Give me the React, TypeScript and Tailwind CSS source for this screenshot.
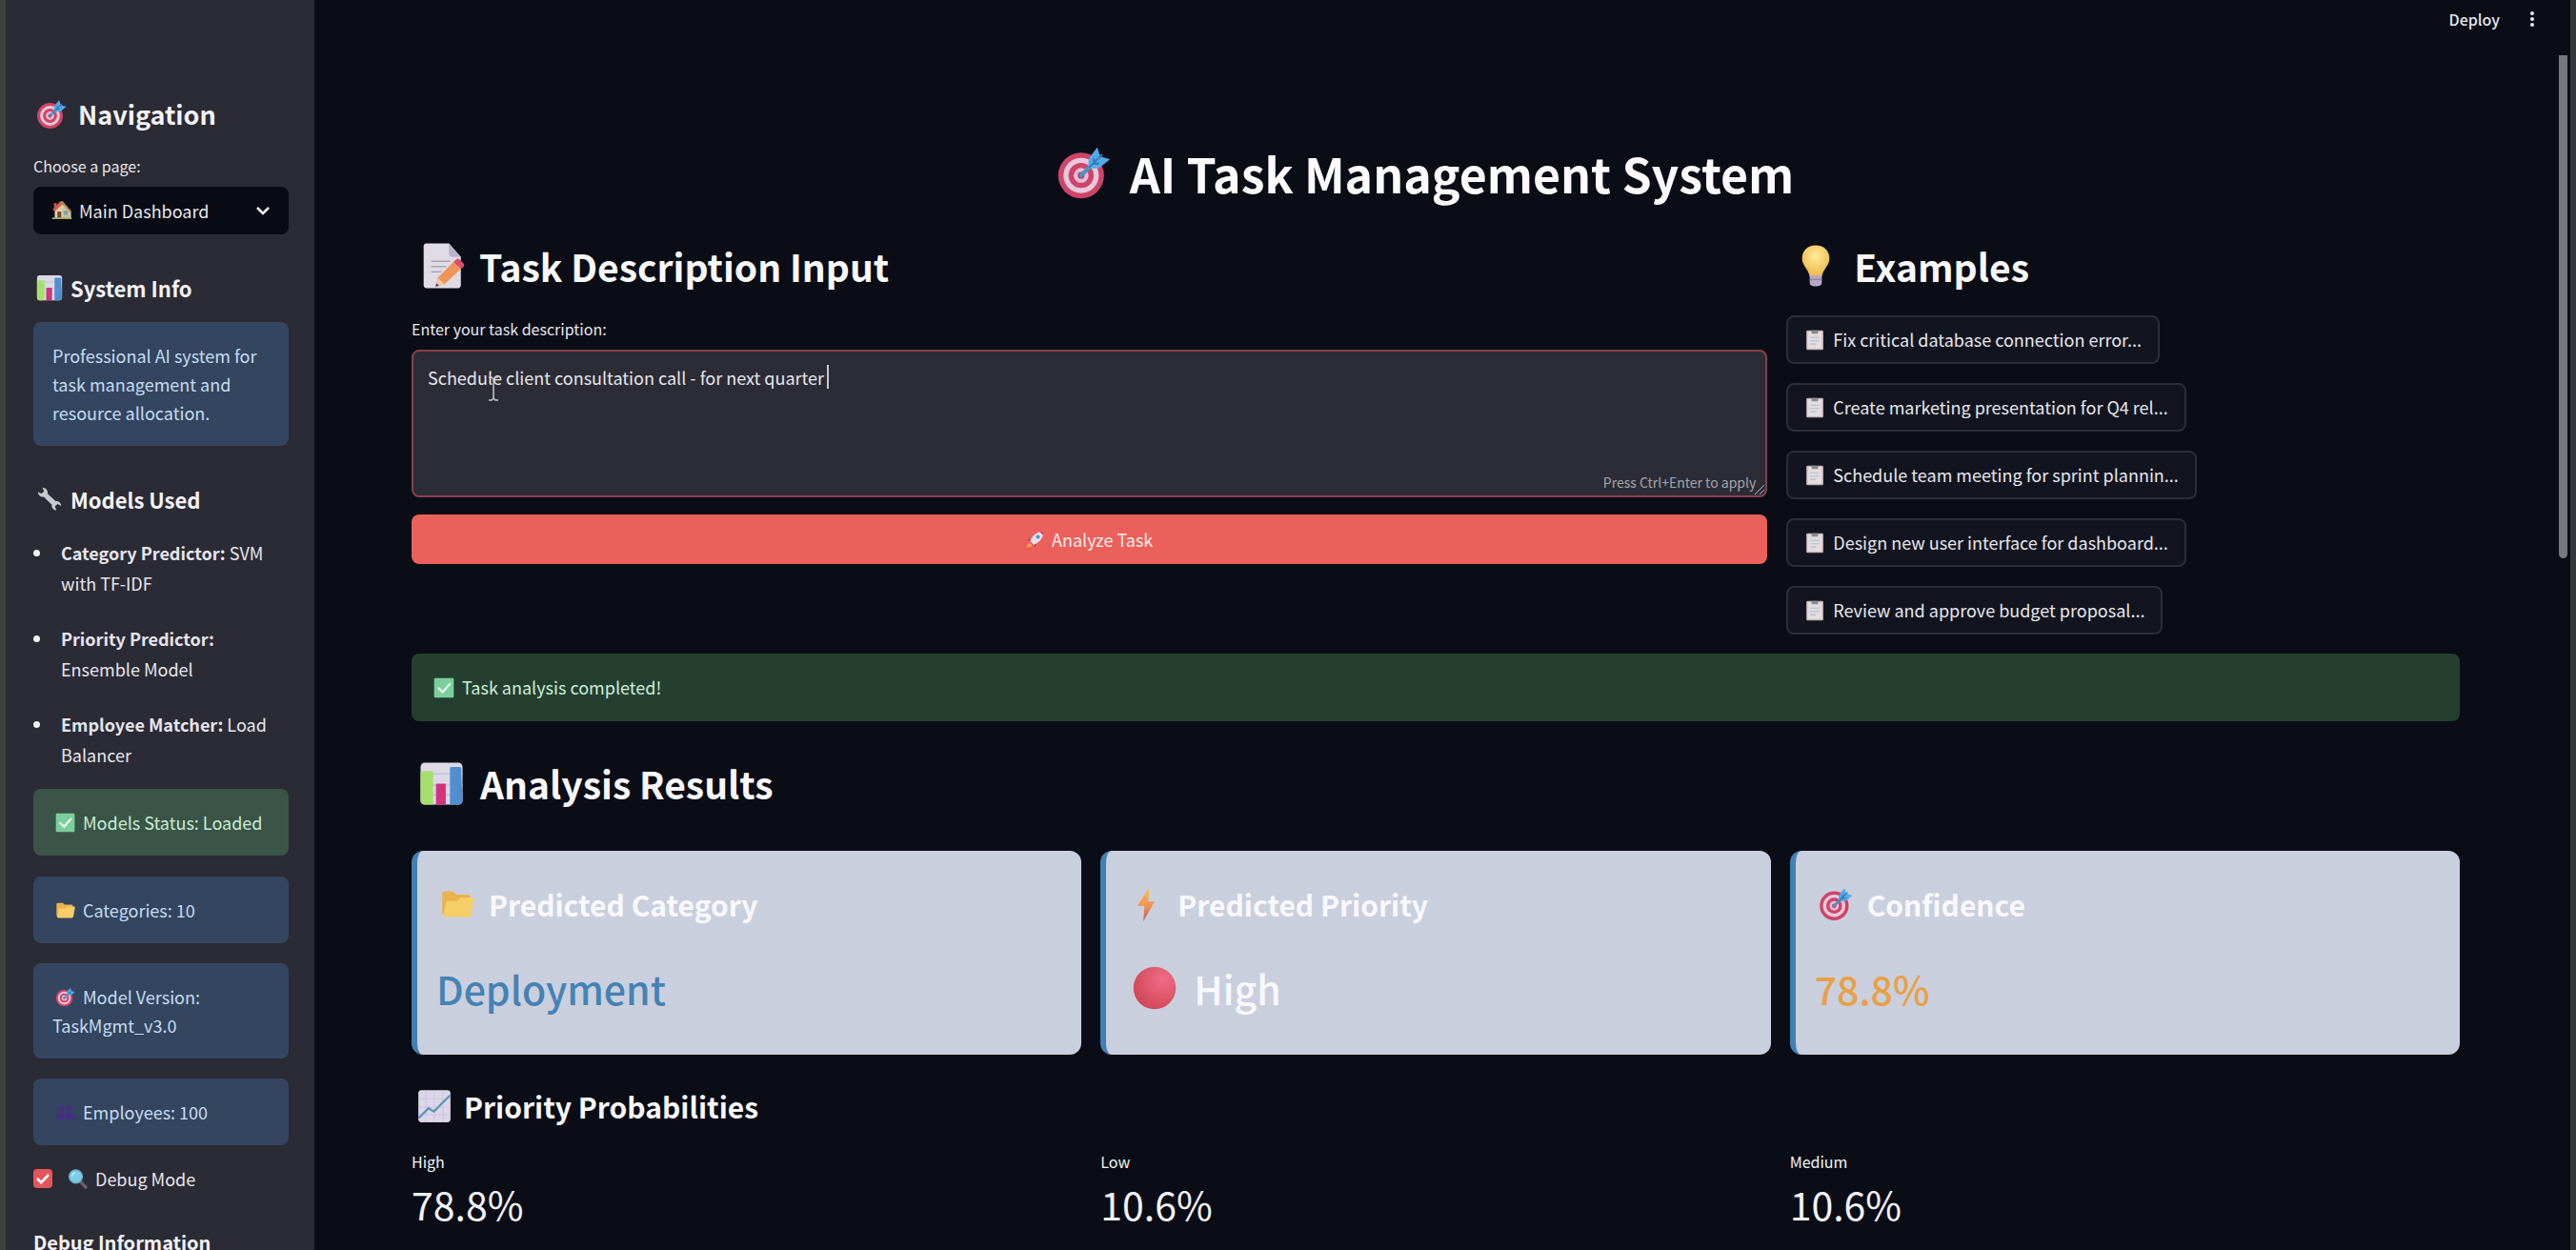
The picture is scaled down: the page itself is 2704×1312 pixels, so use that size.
import type { ReactNode } from "react";
import { useState } from "react";

type IconProps = { className: string };

function Svg({ className, children }: { className: string; children: ReactNode }) {
  return (
    <svg viewBox="0 0 32 32" className={`shrink-0 ${className}`} aria-hidden="true">
      {children}
    </svg>
  );
}

function Target({ className }: IconProps) {
  return (
    <Svg className={className}>
      <circle cx="14.5" cy="17.5" r="13.5" fill="#cf4468" />
      <circle cx="14.5" cy="17.5" r="10.4" fill="#e9c8dc" />
      <circle cx="14.5" cy="17.5" r="7.4" fill="#cf4468" />
      <circle cx="14.5" cy="17.5" r="4.4" fill="#e6bdd3" />
      <circle cx="14.5" cy="17.5" r="2" fill="#c23c66" />
      <path d="M14.5 17.5 24 8" stroke="#4d93c4" strokeWidth="2.4" strokeLinecap="round" />
      <path d="M18.5 13.5 19 7.5 24 1l1.8 5.2L31.5 8 25 13.2Z" fill="#55a9e6" />
      <path d="M19 13 27 5M22 7.5v3h3" stroke="#2f79b6" strokeWidth="1.1" fill="none" />
    </Svg>
  );
}

function House({ className }: IconProps) {
  return (
    <Svg className={className}>
      <path d="M5 14 14 5l12 11v13H5Z" fill="#e0cdb0" />
      <path d="M16 28V16l6-7 8 10v10H16Z" fill="#c9c39a" />
      <path d="M2 16 13 3.5l5 3L5 19Z" fill="#d8603f" />
      <path d="M13 3.5 17 3l13 15-2 2Z" fill="#b98a63" />
      <rect x="4" y="6" width="4" height="9" fill="#c65a45" />
      <rect x="9" y="19" width="6" height="10" fill="#7b4a35" />
      <rect x="19" y="18" width="6" height="6" fill="#7aa0b4" />
      <path d="M1 28h30v2.5H1Z" fill="#9fb36e" />
    </Svg>
  );
}

function BarChart({ className }: IconProps) {
  return (
    <Svg className={className}>
      <rect x="1" y="1" width="30" height="30" rx="3" fill="#dcd9e6" />
      <path d="M1 9h30M1 17h30M1 24h30" stroke="#c6c2d4" strokeWidth="1" />
      <path d="M2 8a1 1 0 0 1 1-1h6a1 1 0 0 1 1 1v23H4a3 3 0 0 1-3-3V8Z" fill="#a5e06e" />
      <path d="M12 17a1 1 0 0 1 1-1h6v15h-7Z" fill="#d4337c" />
      <path d="M22 5a1 1 0 0 1 1-1h6a1 1 0 0 1 1 1l1 23a3 3 0 0 1-3 3h-6Z" fill="#4f8fd0" />
    </Svg>
  );
}

function LineChart({ className }: IconProps) {
  return (
    <Svg className={className}>
      <rect x="1" y="1" width="30" height="30" rx="3" fill="#dcd6e8" />
      <path d="M8 1v30M16 1v30M24 1v30M1 9h30M1 17h30M1 24h30" stroke="#cbc4dc" strokeWidth=".8" />
      <path d="m1.500 27 9-9 5 3L30.500 6" stroke="#5b97b5" strokeWidth="2" fill="none" />
    </Svg>
  );
}

function Wrench({ className }: IconProps) {
  return (
    <Svg className={className}>
      <path
        d="M2 7.500 7.500 2c4 0 7 3.500 6.200 7.400l9.600 8.900c3.700-.6 6.700 2 6.700 5.700l-4.300-2.200-3.200 2.900 1.800 4.600c-3.800-.3-6.100-3-5.600-6.800L9 13.200C5.500 13.800 2.500 11.500 2 7.500l4.400 1.700 3-2.700L7.500 2Z"
        fill="#c9c8cf"
      />
    </Svg>
  );
}

function CheckBox({ className }: IconProps) {
  return (
    <Svg className={className}>
      <rect x="1" y="1" width="30" height="30" rx="2" fill="#7ccf9c" />
      <path d="m8 16.500 6 6L25 10" stroke="#f0fff5" strokeWidth="3" fill="none" strokeLinecap="round" />
    </Svg>
  );
}

function Folder({ className }: IconProps) {
  return (
    <Svg className={className}>
      <path d="M2 6a2 2 0 0 1 2-2h8l3 3h11a2 2 0 0 1 2 2v17H4a2 2 0 0 1-2-2Z" fill="#eab24a" />
      <path d="M6 13h10l3-3h11a1.500 1.500 0 0 1 1.400 2L29 26a3 3 0 0 1-3 2H5a2 2 0 0 1-2-2Z" fill="#f7cd66" />
    </Svg>
  );
}

function People({ className }: IconProps) {
  return (
    <Svg className={className}>
      <g fill="#43307f">
        <circle cx="10" cy="10" r="5" />
        <path d="M1 28v-5c0-4 3-6.500 9-6.500 3 0 5 1 6 3 1-2 3-3 6-3 6 0 9 2.500 9 6.500v5Z" />
        <circle cx="22" cy="10" r="5" />
      </g>
      <path d="M16 19v9" stroke="#34456a" strokeWidth="1.500" />
    </Svg>
  );
}

function Magnifier({ className }: IconProps) {
  return (
    <Svg className={className}>
      <path d="m20 20 9 9" stroke="#6a5f6d" strokeWidth="5" strokeLinecap="round" />
      <circle cx="13" cy="12" r="10.500" fill="#7fcbe6" stroke="#66aecb" strokeWidth="2" />
      <path d="M7 11c.5-3 2.500-5 5.500-5" stroke="#c6effb" strokeWidth="2" fill="none" strokeLinecap="round" />
    </Svg>
  );
}

function Memo({ className }: IconProps) {
  return (
    <Svg className={className}>
      <path d="M3 3a2 2 0 0 1 2-2h15l8 9v19a2 2 0 0 1-2 2H5a2 2 0 0 1-2-2Z" fill="#dfdce6" />
      <path d="M20 1v7a2 2 0 0 0 2 2h6Z" fill="#b7b3cc" />
      <path d="M8 13h13M8 16.500h10M8 20h7" stroke="#a9a6b4" strokeWidth="1" />
      <path d="m11 30 1.500-6L23 13.500l5 4.500L17 28.500Z" fill="#f0955a" />
      <path d="m23 13.500 1.500-1.500c1-1 2-1 3 0l2 2c1 1 1 2 0 3L28 18Z" fill="#d94f6b" />
      <path d="m11 30 1.500-6 4.500 4.500Z" fill="#efc9a8" />
      <path d="m11 30 .6-2.400 1.800 1.700Z" fill="#4c4450" />
    </Svg>
  );
}

function Bulb({ className }: IconProps) {
  return (
    <Svg className={className}>
      <defs>
        <radialGradient id="bulb" cx=".5" cy=".35" r=".6">
          <stop offset="0" stopColor="#fdeb9c" />
          <stop offset="1" stopColor="#efbb4e" />
        </radialGradient>
      </defs>
      <path d="M16 1C9.800 1 6 5.300 6 10.700c0 5 4.600 7.300 5.600 13.300h8.800C21.400 18 26 15.700 26 10.700 26 5.300 22.200 1 16 1Z" fill="url(#bulb)" />
      <path d="M11.600 23h8.800v5.500c0 1.500-1.400 2.500-4.400 2.500s-4.400-1-4.400-2.500Z" fill="#b9a5c4" />
      <path d="M11.600 26h8.800" stroke="#93809f" strokeWidth="1" />
    </Svg>
  );
}

function Rocket({ className }: IconProps) {
  return (
    <Svg className={className}>
      <path d="M9 14 2 17l5 2ZM18 23l-3 7-2-5Z" fill="#c33a5c" />
      <path d="M7 19C10 10 18 3 30 2c-1 12-8 20-17 23Z" fill="#e5dfec" />
      <path d="M23 3.500C25 2.600 27.500 2.100 30 2c-.1 2.500-.6 5-1.500 7Z" fill="#c84468" />
      <circle cx="20" cy="12" r="3.200" fill="#4f8fd0" />
      <path d="M6 22c-3 1-4 4-4 8 4 0 7-1 8-4Z" fill="#f3a24c" />
    </Svg>
  );
}

function Clipboard({ className }: IconProps) {
  return (
    <Svg className={className}>
      <rect x="3" y="1" width="26" height="30" rx="2" fill="#c4b2b4" />
      <rect x="5" y="3" width="22" height="26" fill="#e2dde3" />
      <rect x="11" y="1" width="10" height="5" rx="1" fill="#8d8791" />
      <path d="M9 12h14M9 17h14M9 22h9" stroke="#c0bbc4" strokeWidth="1.500" />
    </Svg>
  );
}

function Bolt({ className }: IconProps) {
  return (
    <Svg className={className}>
      <defs>
        <linearGradient id="bolt" x1="0" y1="0" x2="0" y2="1">
          <stop offset="0" stopColor="#f6c25c" />
          <stop offset=".55" stopColor="#ee9350" />
          <stop offset="1" stopColor="#c75470" />
        </linearGradient>
      </defs>
      <path d="M19 0 8 17.500h6.500L13.500 32 24 13.500h-6Z" fill="url(#bolt)" />
    </Svg>
  );
}

function RedCircle({ className }: IconProps) {
  return (
    <Svg className={className}>
      <defs>
        <radialGradient id="red" cx=".7" cy=".3" r=".8">
          <stop offset="0" stopColor="#ee6c84" />
          <stop offset="1" stopColor="#cf4655" />
        </radialGradient>
      </defs>
      <circle cx="16" cy="16" r="15.500" fill="url(#red)" />
    </Svg>
  );
}

const examples = [
  "Fix critical database connection error...",
  "Create marketing presentation for Q4 rel...",
  "Schedule team meeting for sprint plannin...",
  "Design new user interface for dashboard...",
  "Review and approve budget proposal...",
];

const models = [
  ["Category Predictor:", "SVM with TF-IDF"],
  ["Priority Predictor:", "Ensemble Model"],
  ["Employee Matcher:", "Load Balancer"],
];

const probabilities = [
  ["High", "78.8%"],
  ["Low", "10.6%"],
  ["Medium", "10.6%"],
];

function SideHeading({ icon, children }: { icon: ReactNode; children: ReactNode }) {
  return (
    <h3 className="flex items-center gap-2 pl-[3px] text-[22px] leading-8 font-bold text-[#f3f3f7]">
      {icon}
      {children}
    </h3>
  );
}

function SideNote({ icon, children }: { icon?: ReactNode; children: ReactNode }) {
  return (
    <div className="rounded-lg bg-[#34455f] px-5 py-5 text-[18px] leading-[30px] text-[#c5dcf3]">
      {icon}
      {children}
    </div>
  );
}

function Sidebar() {
  const [debug, setDebug] = useState(true);
  return (
    <aside className="flex w-[330px] shrink-0 flex-col overflow-hidden border-l-[6px] border-[#3f403e] bg-[#2b2b35] pr-[27px] pl-[29px] text-[#e6e6ec]">
      <h2 className="mt-[100px] flex items-center gap-3 pl-[3px] text-[27px] leading-10 font-bold text-[#f3f3f7]">
        <Target className="size-8" />
        Navigation
      </h2>
      <label htmlFor="page" className="mt-[22px] text-[16px] leading-6">
        Choose a page:
      </label>
      <div className="relative mt-[10px]">
        <select
          id="page"
          className="h-[50px] w-full appearance-none rounded-lg bg-[#090b14] pr-10 pl-12 text-[18px] text-[#e6e6ec]"
        >
          <option>Main Dashboard</option>
        </select>
        <House className="pointer-events-none absolute top-[13px] left-[19px] size-[22px]" />
        <svg
          viewBox="0 0 16 16"
          className="pointer-events-none absolute top-[17px] right-[19px] size-4"
          fill="none"
          stroke="#f0f0f4"
          strokeWidth="2.500"
          aria-hidden="true"
        >
          <path d="m2 5 6 6 6-6" />
        </svg>
      </div>

      <div className="mt-10">
        <SideHeading icon={<BarChart className="size-7" />}>System Info</SideHeading>
      </div>
      <div className="mt-5">
        <SideNote>Professional AI system for task management and resource allocation.</SideNote>
      </div>

      <div className="mt-10">
        <SideHeading icon={<Wrench className="size-7" />}>Models Used</SideHeading>
      </div>
      <ul className="mt-6 flex flex-col gap-[26px] text-[18px] leading-8">
        {models.map(([name, model]) => (
          <li key={name} className="relative pl-[29px]">
            <span className="absolute top-[13px] left-0 size-[7px] rounded-full bg-[#f3f3f7]" />
            <strong>{name}</strong> {model}
          </li>
        ))}
      </ul>

      <div className="mt-5 flex items-center gap-2 rounded-lg bg-[#3a5547] py-5 pl-[23px] text-[18px] leading-[30px] text-[#c9ecd8]">
        <CheckBox className="size-[21px]" />
        Models Status: Loaded
      </div>
      <div className="mt-[22px] flex flex-col gap-[21px]">
        <SideNote icon={<Folder className="mr-2 ml-[3px] inline-block size-[21px] align-[-3px]" />}>
          Categories: 10
        </SideNote>
        <SideNote icon={<Target className="mr-2 ml-[3px] inline-block size-[21px] align-[-3px]" />}>
          Model Version: TaskMgmt_v3.0
        </SideNote>
        <SideNote icon={<People className="mr-2 ml-[3px] inline-block size-[21px] align-[-3px]" />}>
          Employees: 100
        </SideNote>
      </div>

      <label className="mt-5 flex items-center text-[18px] leading-[30px]">
        <span className="relative flex size-5">
          <input
            type="checkbox"
            checked={debug}
            onChange={(event) => setDebug(event.target.checked)}
            className="size-5 appearance-none rounded bg-[#33343e] checked:bg-[#e5555c]"
          />
          {debug && (
            <svg
              viewBox="0 0 20 20"
              className="pointer-events-none absolute inset-0 size-5"
              fill="none"
              stroke="#fff"
              strokeWidth="2.600"
              aria-hidden="true"
            >
              <path d="m4 10 4.200 4.200L16 6" />
            </svg>
          )}
        </span>
        <Magnifier className="mr-2 ml-4 size-[21px]" />
        Debug Mode
      </label>
      <p className="mt-9 text-[20px] leading-8 font-bold whitespace-nowrap text-[#f3f3f7]">Debug Information</p>
    </aside>
  );
}

function SectionHeading({ icon, children }: { icon: ReactNode; children: ReactNode }) {
  return (
    <h2 className="flex items-center gap-[13px] pl-2 text-[39px] leading-[56px] font-bold text-[#f8f8fb]">
      {icon}
      {children}
    </h2>
  );
}

function ResultCard({ icon, title, children }: { icon: ReactNode; title: string; children: ReactNode }) {
  return (
    <div className="rounded-xl border-l-[6px] border-[#3f81b3] bg-[#cacfde] px-5 pt-[34px] pb-10">
      <h3 className="flex items-center gap-[15px] pl-1 text-[30px] leading-[44px] font-bold text-[#f8f9fd]">
        {icon}
        {title}
      </h3>
      <div className="mt-9 flex items-center text-[41px] leading-[60px] font-medium">{children}</div>
    </div>
  );
}

function TaskForm() {
  const [task, setTask] = useState("Schedule client consultation call - for next quarter");
  return (
    <form
      className="flex min-w-0 grow basis-[calc(66.66%-20px)] flex-col"
      onSubmit={(event) => event.preventDefault()}
    >
      <SectionHeading icon={<Memo className="size-[50px]" />}>Task Description Input</SectionHeading>
      <label htmlFor="task" className="mt-[26px] text-[16px] leading-6 text-[#e6e6ec]">
        Enter your task description:
      </label>
      <div className="relative mt-[10px] flex">
        <textarea
          id="task"
          value={task}
          onChange={(event) => setTask(event.target.value)}
          className="h-[155px] w-full resize-none rounded-lg border-2 border-[#87404f] bg-[#2c2c36] px-[15px] py-[11px] text-[18px] leading-8 text-[#e6e6ec] outline-none"
        />
        <span className="absolute top-4 left-[436px] h-[25px] w-0.5 bg-[#c9c9cf]" />
        <svg
          viewBox="0 0 12 26"
          className="pointer-events-none absolute top-7 left-20 h-[26px] w-3"
          fill="none"
          stroke="#c4c4ca"
          strokeWidth="1.500"
          aria-hidden="true"
        >
          <path d="M1 1h3l2 2 2-2h3M6 3v20M1 25h3l2-2 2 2h3" />
        </svg>
        <span className="absolute right-3 bottom-1 text-[14px] leading-6 text-[#a5a5ad]">
          Press Ctrl+Enter to apply
        </span>
        <svg
          viewBox="0 0 10 10"
          className="pointer-events-none absolute right-[3px] bottom-[3px] size-[10px]"
          stroke="#b6b6bd"
          aria-hidden="true"
        >
          <path d="m0 10 10-10M5 10l5-5" />
        </svg>
      </div>
      <button
        type="submit"
        className="mt-[18px] flex h-[52px] items-center justify-center gap-[7px] rounded-lg bg-[#eb605b] text-[18px] text-[#fbeeee]"
      >
        <Rocket className="size-5" />
        Analyze Task
      </button>
    </form>
  );
}

export default function App() {
  return (
    <div className="flex h-screen overflow-hidden bg-[#0a0d16] font-['Noto_Sans_CJK_SC','Source_Sans_Pro',sans-serif]">
      <Sidebar />
      <div className="relative flex min-w-0 flex-1 flex-col overflow-hidden border-r-[6px] border-[#36363d]">
        <header className="flex h-10 shrink-0 items-center justify-end gap-6 pr-[30px] text-[#e6e6ec]">
          <button type="button" className="text-[16px] leading-6 font-medium">
            Deploy
          </button>
          <button type="button" aria-label="Menu" className="flex w-5 flex-col items-center gap-0.5">
            <span className="size-1 rounded-full bg-[#e6e6ec]" />
            <span className="size-1 rounded-full bg-[#e6e6ec]" />
            <span className="size-1 rounded-full bg-[#e6e6ec]" />
          </button>
        </header>
        <div className="absolute top-[58px] right-[3px] h-[528px] w-[9px] rounded-b-full bg-[#77787d]" />

        <main className="pt-[107px] pr-[116px] pl-[102px]">
          <h1 className="flex items-center justify-center gap-5 pr-[22px] text-[50px] leading-[68px] font-bold text-[#fbfbfd]">
            <Target className="size-[57px]" />
            AI Task Management System
          </h1>

          <div className="mt-9 flex gap-5">
            <TaskForm />
            <section className="min-w-0 grow basis-[calc(33.33%-20px)]">
              <SectionHeading icon={<Bulb className="mr-1 size-[46px]" />}>Examples</SectionHeading>
              <ul className="mt-6 flex flex-col items-start gap-5">
                {examples.map((example) => (
                  <li key={example} className="flex">
                    <button
                      type="button"
                      className="flex h-[51px] items-center gap-2 rounded-lg border-2 border-[#2c2d37] bg-[#12151f] px-[17px] text-[18px] text-[#e6e6ec]"
                    >
                      <Clipboard className="size-[22px]" />
                      {example}
                    </button>
                  </li>
                ))}
              </ul>
            </section>
          </div>

          <div className="mt-5 flex h-[71px] items-center gap-2 rounded-lg bg-[#243f2f] px-[23px] text-[18px] text-[#cdeedb]">
            <CheckBox className="size-[22px]" />
            Task analysis completed!
          </div>

          <div className="mt-[37px]">
            <SectionHeading icon={<BarChart className="mr-1 size-[47px]" />}>Analysis Results</SectionHeading>
          </div>

          <div className="mt-[43px] grid grid-cols-3 gap-5">
            <ResultCard icon={<Folder className="size-9" />} title="Predicted Category">
              <span className="text-[#4582b4]">Deployment</span>
            </ResultCard>
            <ResultCard icon={<Bolt className="size-9" />} title="Predicted Priority">
              <span className="flex items-center gap-[18px] pl-2 text-[#f8f9fd]">
                <RedCircle className="size-[46px]" />
                High
              </span>
            </ResultCard>
            <ResultCard icon={<Target className="size-9" />} title="Confidence">
              <span className="text-[#e9a046]">78.8%</span>
            </ResultCard>
          </div>

          <h3 className="mt-8 flex items-center gap-[13px] pl-1.5 text-[30px] leading-[44px] font-bold text-[#f8f8fb]">
            <LineChart className="size-9" />
            Priority Probabilities
          </h3>
          <dl className="mt-6 grid grid-cols-3 gap-5 text-[#f3f3f7]">
            {probabilities.map(([level, value]) => (
              <div key={level}>
                <dt className="text-[16px] leading-6">{level}</dt>
                <dd className="mt-1 text-[41px] leading-[56px]">{value}</dd>
              </div>
            ))}
          </dl>
        </main>
      </div>
    </div>
  );
}
